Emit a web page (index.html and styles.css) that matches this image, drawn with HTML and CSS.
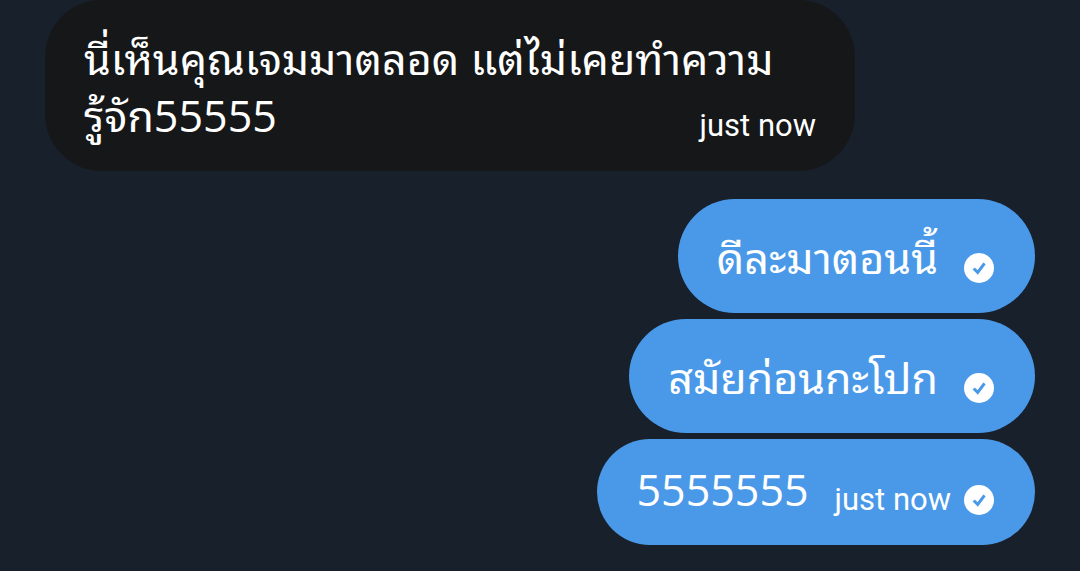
FILE: index.html
```html
<!DOCTYPE html>
<html lang="th">
<head>
<meta charset="utf-8">
<meta name="viewport" content="width=device-width, initial-scale=1">
<title>Messages</title>
<link rel="stylesheet" href="styles.css">
</head>
<body>
<main class="chat">
  <article class="bubble received">
    <p class="text">นี่เห็นคุณเจมมาตลอด แต่ไม่เคยทำความ<br>รู้จัก55555</p>
    <time class="time">just now</time>
  </article>
  <section class="sent-group">
    <article class="bubble sent">
      <p class="text">ดีละมาตอนนี้</p>
      <svg class="check" viewBox="0 0 30 30" role="img" aria-label="Sent"><circle cx="15" cy="15" r="15"/><path d="M9.7 15.5l4 3.9 6.8-9"/></svg>
    </article>
    <article class="bubble sent">
      <p class="text">สมัยก่อนกะโปก</p>
      <svg class="check" viewBox="0 0 30 30" role="img" aria-label="Sent"><circle cx="15" cy="15" r="15"/><path d="M9.7 15.5l4 3.9 6.8-9"/></svg>
    </article>
    <article class="bubble sent compact">
      <p class="text">5555555</p>
      <time class="time">just now</time>
      <svg class="check" viewBox="0 0 30 30" role="img" aria-label="Sent"><circle cx="15" cy="15" r="15"/><path d="M9.7 15.5l4 3.9 6.8-9"/></svg>
    </article>
  </section>
</main>
</body>
</html>
```
FILE: styles.css
```css
* { box-sizing: border-box; }
body {
  margin: 0;
  min-height: 100vh;
  background: #18202b;
  color: #fff;
  font-family: "Open Sans", "Noto Sans Thai Looped", "Noto Looped Thai", "Loma", sans-serif;
}
.chat { display: flex; flex-direction: column; gap: 28px; padding: 0 45px 26px; }
.bubble { display: flex; align-items: flex-end; border-radius: 57px; }
.text { margin: 0; font-size: 43px; line-height: 57px; white-space: nowrap; }
.time { font-family: Roboto, sans-serif; font-size: 31px; line-height: 36px; white-space: nowrap; }
.received {
  align-self: flex-start;
  justify-content: space-between;
  width: 810px;
  max-width: 100%;
  padding: 30px 39px 27px;
  background: #161718;
}
.received .text { flex: 1 1 0; min-width: 0; }
.sent-group { display: flex; flex-direction: column; align-items: flex-end; gap: 6px; }
.sent { padding: 30px 41px 27px 39px; background: #4a99e9; }
.sent .text { margin-right: 26px; }
.compact { padding: 22px 41px 27px 39px; }
.compact .time { margin-right: 13px; }
.check { width: 30px; height: 30px; margin-bottom: 3px; fill: #fff; }
.check path { fill: none; stroke: #4a99e9; stroke-width: 3; }
```
